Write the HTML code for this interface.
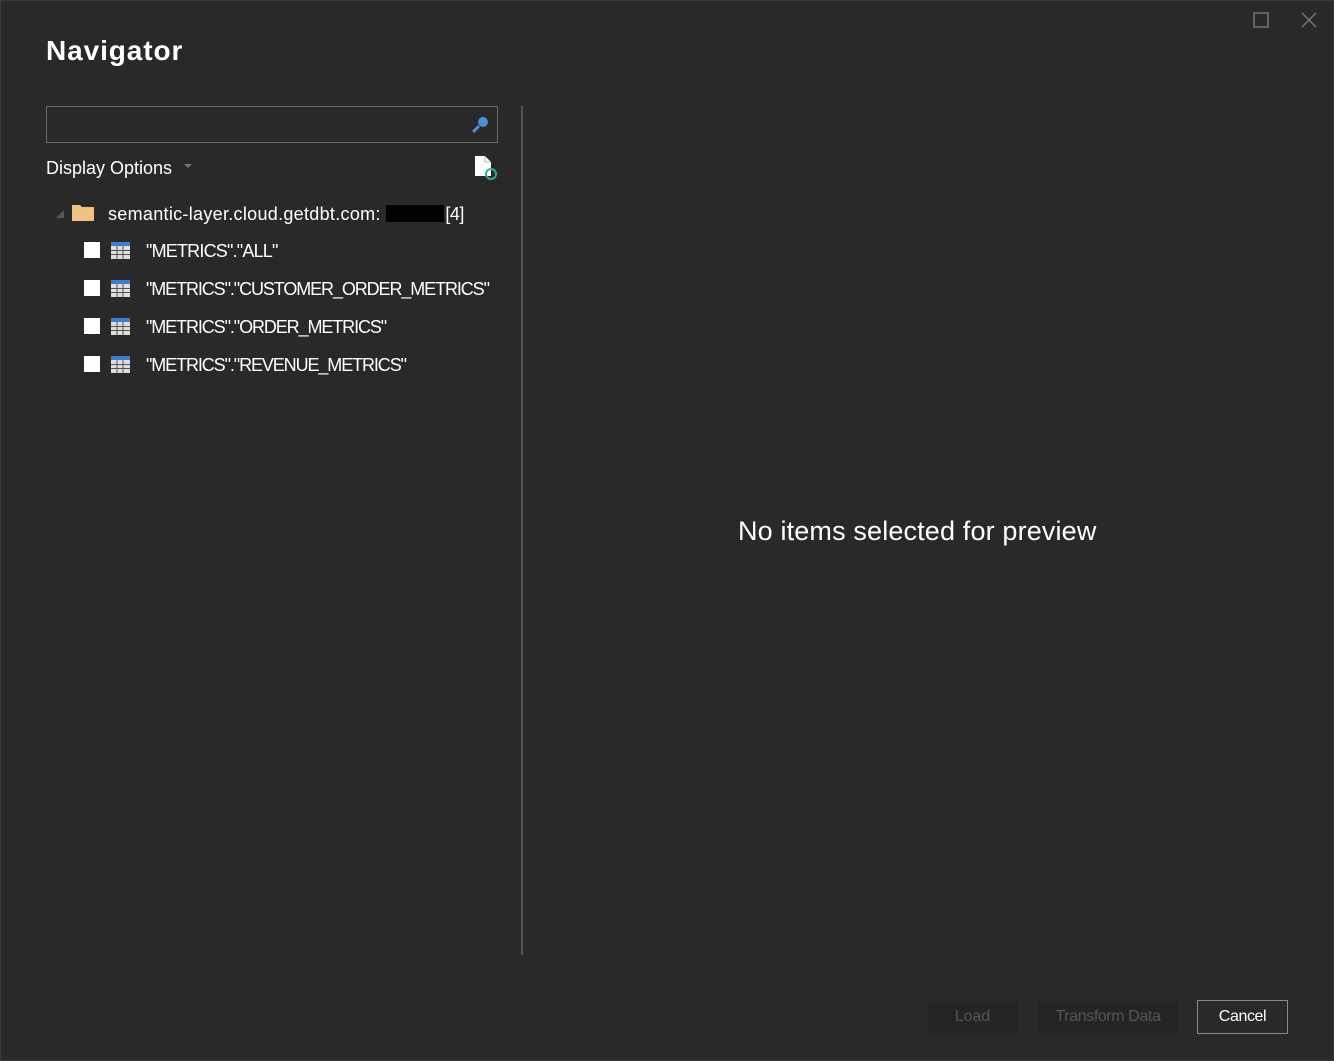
<!DOCTYPE html><html><head><style>
body{margin:0;width:1334px;height:1061px;background:#292929;font-family:"Liberation Sans",sans-serif;color:#fff;position:relative;overflow:hidden}
.a{position:absolute}
.t{font-size:18px;letter-spacing:0.1px;white-space:nowrap}
.u{letter-spacing:-1.1px}
.cb{width:16px;height:16px;background:#fff;left:84px}
.ic{left:111px}
</style></head><body>
<div class="a" style="left:0;top:0;width:1332px;height:1059px;border:1px solid #3a3a3a"></div>
<svg class="a" style="left:1253px;top:12px" width="16" height="16"><rect x="1" y="1" width="14" height="14" fill="none" stroke="#777" stroke-width="1.5"/></svg>
<svg class="a" style="left:1300px;top:11px" width="18" height="18"><path d="M2 2L16 16M16 2L2 16" stroke="#777" stroke-width="1.5"/></svg>
<div class="a" style="left:46px;top:35px;font-size:28px;font-weight:bold;letter-spacing:0.9px">Navigator</div>
<div class="a" style="left:46px;top:106px;width:450px;height:35px;border:1px solid #6a6a6a"></div>
<svg class="a" style="left:471px;top:115px" width="20" height="20"><circle cx="12" cy="7" r="5" fill="#4a90d9"/><path d="M8 11L2 17" stroke="#4a90d9" stroke-width="3"/></svg>
<div class="a t" style="left:46px;top:158px;letter-spacing:0px">Display Options</div>
<div class="a" style="left:184px;top:164px;border:4px solid transparent;border-top:4px solid #777"></div>
<svg class="a" style="left:474px;top:155px" width="24" height="26"><path d="M1 1H11L17 7V21H1Z" fill="#fff"/><path d="M11 1V7H17" fill="none" stroke="#bbb"/><circle cx="17" cy="19" r="5" fill="none" stroke="#3a9" stroke-width="2"/></svg>
<div class="a" style="left:56px;top:210px;border:4px solid transparent;border-right:4px solid #555;border-bottom:4px solid #555"></div>
<svg class="a" style="left:71px;top:202px" width="24" height="20"><path d="M1 3H9L11 5H23V19H1Z" fill="#f0c383"/></svg>
<div class="a t" style="left:108px;top:204px;letter-spacing:0.3px">semantic-layer.cloud.getdbt.com: <span style="background:#000;color:#000;display:inline-block;width:58px;height:17px;vertical-align:-2px"></span> <span style="letter-spacing:-0.5px;margin-left:-4px">[4]</span></div>
<div class="a" style="left:521px;top:106px;width:2px;height:849px;background:#555"></div>
<div class="a cb" style="top:242px"></div><svg class="a ic" style="top:242px" width="19" height="17"><rect width="19" height="17" fill="#ddd"/><rect width="19" height="4" fill="#3b7fcc"/><path d="M6 4V17M12 4V17M0 8.5H19M0 12.5H19" stroke="#555" stroke-width="1"/></svg><div class="a t u" style="left:146px;top:241px;letter-spacing:-0.8px">"METRICS"."ALL"</div>
<div class="a cb" style="top:280px"></div><svg class="a ic" style="top:280px" width="19" height="17"><rect width="19" height="17" fill="#ddd"/><rect width="19" height="4" fill="#3b7fcc"/><path d="M6 4V17M12 4V17M0 8.5H19M0 12.5H19" stroke="#555" stroke-width="1"/></svg><div class="a t u" style="left:146px;top:279px">"METRICS"."CUSTOMER_ORDER_METRICS"</div>
<div class="a cb" style="top:318px"></div><svg class="a ic" style="top:318px" width="19" height="17"><rect width="19" height="17" fill="#ddd"/><rect width="19" height="4" fill="#3b7fcc"/><path d="M6 4V17M12 4V17M0 8.5H19M0 12.5H19" stroke="#555" stroke-width="1"/></svg><div class="a t u" style="left:146px;top:317px">"METRICS"."ORDER_METRICS"</div>
<div class="a cb" style="top:356px"></div><svg class="a ic" style="top:356px" width="19" height="17"><rect width="19" height="17" fill="#ddd"/><rect width="19" height="4" fill="#3b7fcc"/><path d="M6 4V17M12 4V17M0 8.5H19M0 12.5H19" stroke="#555" stroke-width="1"/></svg><div class="a t u" style="left:146px;top:355px">"METRICS"."REVENUE_METRICS"</div>
<div class="a" style="left:738px;top:516px;font-size:27px;letter-spacing:0.15px">No items selected for preview</div>
<div class="a" style="left:928px;top:1001px;width:89px;height:32px;background:#242424;color:#555;font-size:16px;text-align:center;line-height:32px">Load</div>
<div class="a" style="left:1039px;top:1001px;width:138px;height:32px;background:#242424;color:#555;font-size:16px;text-align:center;line-height:32px;letter-spacing:-0.4px">Transform Data</div>
<div class="a" style="left:1197px;top:1000px;width:89px;height:32px;border:1px solid #8a8a8a;font-size:16px;text-align:center;line-height:32px;letter-spacing:-0.4px">Cancel</div>
</body></html>
